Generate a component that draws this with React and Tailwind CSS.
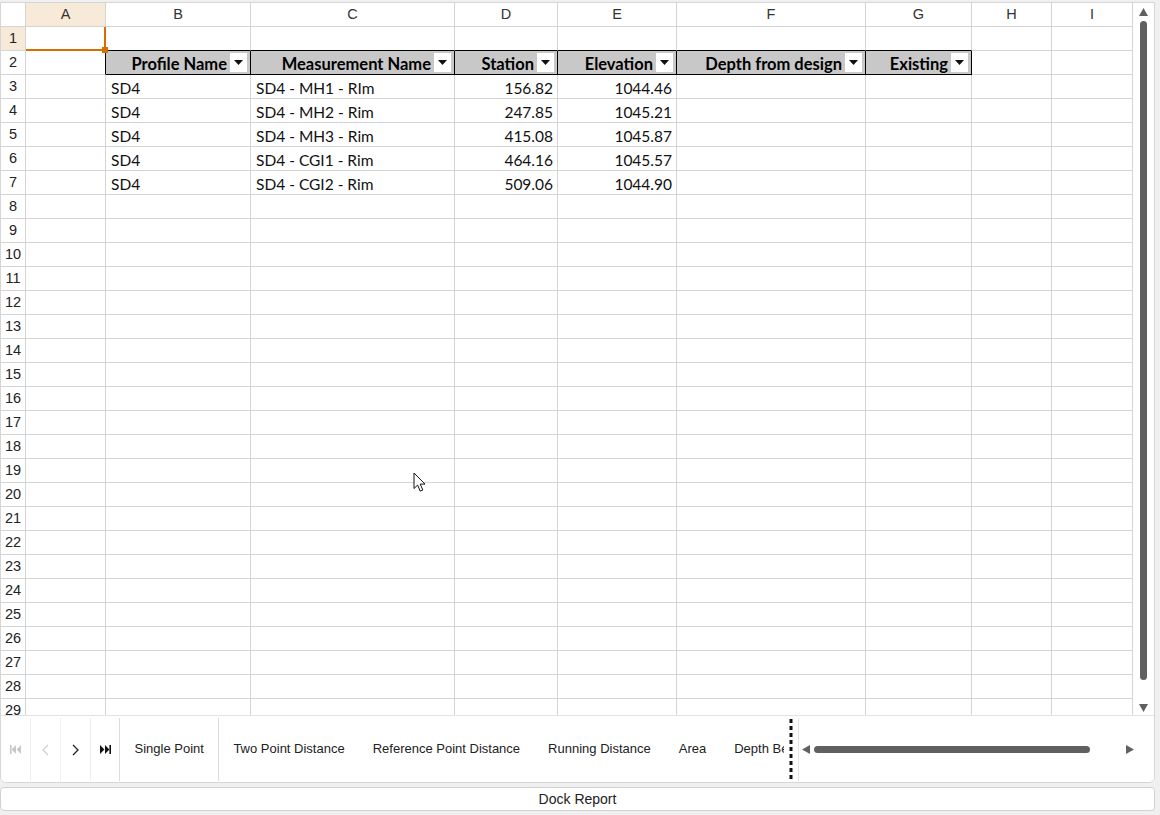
import React from 'react'

const colW = [25, 80, 145, 204, 103, 119, 189, 106, 80, 81]
const letters = ['', 'A', 'B', 'C', 'D', 'E', 'F', 'G', 'H', 'I']

const headers = ['Profile Name', 'Measurement Name', 'Station', 'Elevation', 'Depth from design', 'Existing']

const rows = [
  ['SD4', 'SD4 - MH1 - RIm', '156.82', '1044.46'],
  ['SD4', 'SD4 - MH2 - Rim', '247.85', '1045.21'],
  ['SD4', 'SD4 - MH3 - Rim', '415.08', '1045.87'],
  ['SD4', 'SD4 - CGI1 - Rim', '464.16', '1045.57'],
  ['SD4', 'SD4 - CGI2 - Rim', '509.06', '1044.90'],
]

const tabs = ['Two Point Distance', 'Reference Point Distance', 'Running Distance', 'Area', 'Depth Below Surface']

const cellFont = { fontFamily: 'Lato, "Open Sans", sans-serif' }

function DropButton() {
  return (
    <span className="flex h-[19px] w-[17px] shrink-0 items-center justify-center bg-white">
      <svg width="9" height="5" viewBox="0 0 9 5">
        <path d="M0 0h9L4.5 5z" fill="#111" />
      </svg>
    </span>
  )
}

function Cell({ r, c }) {
  const base = 'h-6 border-r border-b border-[#d4d4d4] overflow-hidden whitespace-nowrap'

  // row header column
  if (c === 0) {
    const hl = r === 1
    return (
      <div
        className={`${base} flex items-center justify-center text-[14.5px] text-[#222] ${hl ? 'bg-[#f7ead9]' : 'bg-white'}`}
        style={{ fontFamily: '"Liberation Sans", Arial, sans-serif' }}
      >
        {r}
      </div>
    )
  }

  if (r === 1) {
    // row 1: A1 holds the selection, B1..G1 carry the table's top edge
    const top = c >= 2 && c <= 7
    return (
      <div className={`h-6 border-r border-b ${top ? 'border-b-black border-r-[#d4d4d4]' : 'border-[#d4d4d4]'} relative`}>
        {c === 1 && (
          <div className="absolute -right-px -bottom-px left-0 top-0 z-10 border-r-2 border-b-2 border-[#d46f00]">
            <div className="absolute -right-[4px] -bottom-[4px] h-[6px] w-[6px] bg-[#d46f00]" />
          </div>
        )}
      </div>
    )
  }

  if (r === 2) {
    if (c === 1) return <div className="h-6 border-r border-b border-[#d4d4d4] border-r-black" />
    if (c >= 2 && c <= 7) {
      return (
        <div
          className="flex h-6 items-center justify-end gap-[3px] border-r border-b border-black bg-[#c8c8c8] pr-[3px] text-[16.5px] font-bold text-black"
          style={cellFont}
        >
          <span className="pt-[4px]">{headers[c - 2]}</span>
          <DropButton />
        </div>
      )
    }
    return <div className={base} />
  }

  const data = rows[r - 3]
  if (data && c >= 2 && c <= 5) {
    const v = data[c - 2]
    const num = c >= 4
    return (
      <div
        className={`${base} flex items-center pt-[4px] text-[15.5px] text-[#111] ${num ? 'justify-end pr-[4px]' : 'pl-[5px]'}`}
        style={cellFont}
      >
        {v}
      </div>
    )
  }
  return <div className={base} />
}

function VScroll() {
  return (
    <div className="flex w-[21px] flex-col items-center bg-white">
      <svg width="9" height="8" viewBox="0 0 9 8" className="mt-[5px]">
        <path d="M4.5 0L9 8H0z" fill="#606060" />
      </svg>
      <div className="mt-[5px] h-[659px] w-[7px] rounded-full bg-[#606060]" />
      <div className="flex-1" />
      <svg width="9" height="8" viewBox="0 0 9 8" className="mb-[3px]">
        <path d="M0 0h9L4.5 8z" fill="#606060" />
      </svg>
    </div>
  )
}

function NavButtons() {
  return (
    <div className="flex h-full">
      <div className="flex w-[30px] items-center justify-center border-r border-[#efefef]">
        <svg width="11" height="9" viewBox="0 0 11 9">
          <rect x="0" y="0" width="1.6" height="9" fill="#c8c8c8" />
          <path d="M6 0v9L1.6 4.5z M11 0v9L6.6 4.5z" fill="#c8c8c8" />
        </svg>
      </div>
      <div className="flex w-[30px] items-center justify-center border-r border-[#efefef]">
        <svg width="7" height="12" viewBox="0 0 7 12">
          <path d="M6 1L1 6l5 5" stroke="#cfcfcf" strokeWidth="1.2" fill="none" />
        </svg>
      </div>
      <div className="flex w-[30px] items-center justify-center border-r border-[#efefef]">
        <svg width="7" height="12" viewBox="0 0 7 12">
          <path d="M1 1l5 5-5 5" stroke="#222" strokeWidth="1.3" fill="none" />
        </svg>
      </div>
      <div className="flex w-[29px] items-center justify-center border-r border-[#dcdcdc]">
        <svg width="11" height="9" viewBox="0 0 11 9">
          <path d="M0 0v9l4.4-4.5z M5 0v9l4.4-4.5z" fill="#111" />
          <rect x="9.4" y="0" width="1.6" height="9" fill="#111" />
        </svg>
      </div>
    </div>
  )
}

function TabBar() {
  const tabFont = { fontFamily: '"Liberation Sans", Arial, sans-serif' }
  return (
    <div className="flex h-[67px] border-t border-[#e2e2e2] bg-white pt-[2px] pb-[1px]">
      <NavButtons />
      <div className="flex h-full w-[664px] overflow-hidden text-[13px] text-[#222]" style={tabFont}>
        <div className="flex h-full shrink-0 items-center border-r border-[#dcdcdc] px-[14.5px] pb-[1px]">Single Point</div>
        {tabs.map((t) => (
          <div key={t} className="flex h-full shrink-0 items-center px-[14px] pb-[1px]">
            {t}
          </div>
        ))}
      </div>
      <svg width="4" height="63" viewBox="0 0 4 63" className="ml-[5px] shrink-0">
        <line x1="2" y1="1" x2="2" y2="63" stroke="#111" strokeWidth="3" strokeDasharray="4 3" />
      </svg>
      <div className="ml-[5px] flex h-full flex-1 items-center border-l border-[#e4e4e4] pl-[3px] pr-[20px]">
        <svg width="8" height="9" viewBox="0 0 8 9">
          <path d="M8 0v9L0 4.5z" fill="#606060" />
        </svg>
        <div className="ml-[4px] h-[7px] w-[276px] rounded-full bg-[#606060]" />
        <div className="flex-1" />
        <svg width="8" height="9" viewBox="0 0 8 9">
          <path d="M0 0v9l8-4.5z" fill="#606060" />
        </svg>
      </div>
    </div>
  )
}

function Cursor() {
  return (
    <svg width="14" height="21" viewBox="0 0 14 21" className="pointer-events-none absolute left-[413px] top-[472px] z-20">
      <path
        d="M1 1v15.5l3.6-3.4 2.6 6 2.6-1.1-2.6-5.9H12z"
        fill="#fff"
        stroke="#111"
        strokeWidth="1"
        strokeLinejoin="round"
      />
    </svg>
  )
}

export default function App() {
  const rowNums = Array.from({ length: 30 }, (_, i) => i)
  return (
    <div className="relative h-[815px] w-[1160px] overflow-hidden bg-[#f0f0f0] pt-[2px]">
      <div className="flex h-[781px] w-[1155px] flex-col overflow-hidden rounded-b-[6px] border border-[#d6d6d6] bg-white">
        <div className="flex h-[712px] overflow-hidden">
          <div className="grid h-max grid-cols-[25px_80px_145px_204px_103px_119px_189px_106px_80px_81px]">
            {letters.map((l, c) => (
              <div
                key={'h' + c}
                className={`flex h-6 items-center justify-center border-r border-b border-[#d4d4d4] text-[14.5px] text-[#333] ${c === 1 ? 'bg-[#f7ead9]' : 'bg-white'}`}
                style={{ fontFamily: '"Liberation Sans", Arial, sans-serif' }}
              >
                {l}
              </div>
            ))}
            {rowNums.slice(1).map((r) =>
              colW.map((_, c) => <Cell key={r + '-' + c} r={r} c={c} />)
            )}
          </div>
          <VScroll />
        </div>
        <TabBar />
      </div>
      <div
        className="mt-[4px] flex h-[24px] w-[1155px] items-center justify-center rounded-[4px] border border-[#d2d2d2] bg-white text-[14px] text-[#222]"
        style={{ fontFamily: '"Liberation Sans", Arial, sans-serif' }}
      >
        Dock Report
      </div>
      <Cursor />
    </div>
  )
}
